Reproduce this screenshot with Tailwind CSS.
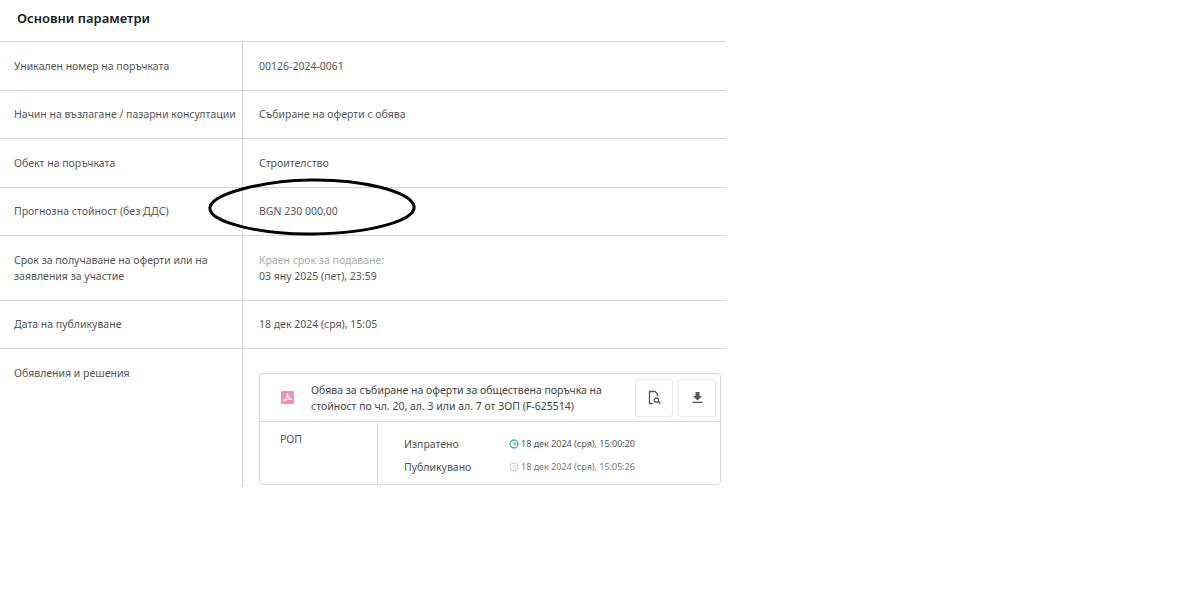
<!DOCTYPE html>
<html lang="bg">
<head>
  <meta charset="UTF-8">
  <title>Основни параметри</title>
  <script src="https://cdn.jsdelivr.net/npm/@tailwindcss/browser@4"></script>
</head>
<body class="bg-white font-['Noto_Sans',sans-serif] text-[10.5px] text-[#555] leading-[16px] overflow-hidden">
  <div class="relative w-[726px]">
    <h2 class="h-[41px] pl-[17px] pt-[9px] text-[13px] leading-[18px] font-semibold text-[#1a1a1a]">Основни параметри</h2>

    <!-- Rows -->
    <div class="grid grid-cols-[243px_1fr] border-t border-[#d4d4d4] h-[49px]">
      <div class="border-r border-[#d4d4d4] pl-[14px] pt-[16px]">Уникален номер на поръчката</div>
      <div class="pl-[16px] pt-[16px]">00126-2024-0061</div>
    </div>
    <div class="grid grid-cols-[243px_1fr] border-t border-[#d4d4d4] h-[48px]">
      <div class="border-r border-[#d4d4d4] pl-[14px] pt-[15px]">Начин на възлагане / пазарни консултации</div>
      <div class="pl-[16px] pt-[15px]">Събиране на оферти с обява</div>
    </div>
    <div class="grid grid-cols-[243px_1fr] border-t border-[#d4d4d4] h-[49px]">
      <div class="border-r border-[#d4d4d4] pl-[14px] pt-[16px]">Обект на поръчката</div>
      <div class="pl-[16px] pt-[16px]">Строителство</div>
    </div>
    <div class="grid grid-cols-[243px_1fr] border-t border-[#d4d4d4] h-[48px]">
      <div class="border-r border-[#d4d4d4] pl-[14px] pt-[15px]">Прогнозна стойност (без ДДС)</div>
      <div class="pl-[16px] pt-[15px]">BGN 230 000,00</div>
    </div>
    <div class="grid grid-cols-[243px_1fr] border-t border-[#d4d4d4] h-[65px]">
      <div class="border-r border-[#d4d4d4] pl-[14px] pt-[16px] pr-[30px]">Срок за получаване на оферти или на заявления за участие</div>
      <div class="pl-[16px] pt-[16px]">
        <div class="text-[#aaa]">Краен срок за подаване:</div>
        <div>03 яну 2025 (пет), 23:59</div>
      </div>
    </div>
    <div class="grid grid-cols-[243px_1fr] border-t border-[#d4d4d4] h-[48px]">
      <div class="border-r border-[#d4d4d4] pl-[14px] pt-[15px]">Дата на публикуване</div>
      <div class="pl-[16px] pt-[15px]">18 дек 2024 (сря), 15:05</div>
    </div>
    <div class="grid grid-cols-[243px_1fr] border-t border-[#d4d4d4] h-[139px]">
      <div class="border-r border-[#d4d4d4] pl-[14px] pt-[16px]">Обявления и решения</div>
      <div class="pl-[16px] pr-[5px] pt-[24px]">
        <!-- Document card -->
        <div class="border border-[#d9d9d9] rounded-[4px] h-[112px]">
          <div class="flex items-center h-[48px] border-b border-[#d9d9d9] pl-[21px] pr-[4px]">
            <svg class="w-[13px] h-[13px] shrink-0" viewBox="0 0 13 13">
              <rect width="13" height="13" rx="1" fill="#f48fb8"/>
              <path d="M6.5 2.5c.4 2.5-1.5 6-4 8M6.500 2.500c0 3 2 5.500 4.500 5.500M2.500 8.500h8" fill="none" stroke="#fff" stroke-width="1.200"/>
            </svg>
            <div class="ml-[17px] w-[300px] text-[#444]">Обява за събиране на оферти за обществена поръчка на стойност по чл. 20, ал. 3 или ал. 7 от ЗОП (F-625514)</div>
            <div class="ml-auto flex gap-[5px]">
              <div class="w-[38px] h-[38px] border border-[#eaeaea] rounded-[3px] flex items-center justify-center">
                <svg class="w-[15px] h-[15px]" viewBox="0 0 15 15" fill="none" stroke="#555" stroke-width="1.300">
                  <path d="M5.500 13.500H2.500V1.500h5.500l2.500 2.500v2"/>
                  <circle cx="9.500" cy="10" r="2.200"/>
                  <path d="M11.200 11.700l2 2"/>
                </svg>
              </div>
              <div class="w-[38px] h-[38px] border border-[#eaeaea] rounded-[3px] flex items-center justify-center">
                <svg class="w-[13px] h-[13px]" viewBox="0 0 13 13" fill="#555">
                  <path d="M4.500 1h4v4h2.500L6.500 9.500 2 5h2.500z"/>
                  <rect x="1.500" y="10.700" width="10" height="1.400"/>
                </svg>
              </div>
            </div>
          </div>
          <div class="grid grid-cols-[118px_1fr] h-[63px]">
            <div class="border-r border-[#d9d9d9] pl-[20px] pt-[9px]">РОП</div>
            <div class="pl-[26px] pt-[10px]">
              <div class="flex items-center h-[23px]">
                <span class="w-[105px]">Изпратено</span>
                <svg class="w-[10px] h-[10px] mr-[2px]" viewBox="0 0 10 10" fill="none" stroke="#3dbb85" stroke-width="1.300">
                  <circle cx="5" cy="5" r="4"/>
                  <path d="M5 2.700V5.300H7" stroke-width="1"/>
                </svg>
                <span class="text-[9px]">18 дек 2024 (сря), 15:00:20</span>
              </div>
              <div class="flex items-center h-[23px]">
                <span class="w-[105px]">Публикувано</span>
                <svg class="w-[10px] h-[10px] mr-[2px]" viewBox="0 0 10 10" fill="none" stroke="#ccc" stroke-width="1">
                  <circle cx="5" cy="5" r="4"/>
                  <path d="M5 2.700V5.300H7"/>
                </svg>
                <span class="text-[9px] text-[#777]">18 дек 2024 (сря), 15:05:26</span>
              </div>
            </div>
          </div>
        </div>
      </div>
    </div>

    <!-- Hand-drawn ellipse over the value -->
    <svg class="absolute left-[205px] top-[175px] w-[215px] h-[65px]" viewBox="0 0 215 65" fill="none">
      <path d="M5 32C8 19 55 6 105 5c50-1 100 11 104 26 3 14-42 27-100 28C60 60 2 48 5 32z" stroke="#000" stroke-width="3"/>
    </svg>
  </div>
</body>
</html>
